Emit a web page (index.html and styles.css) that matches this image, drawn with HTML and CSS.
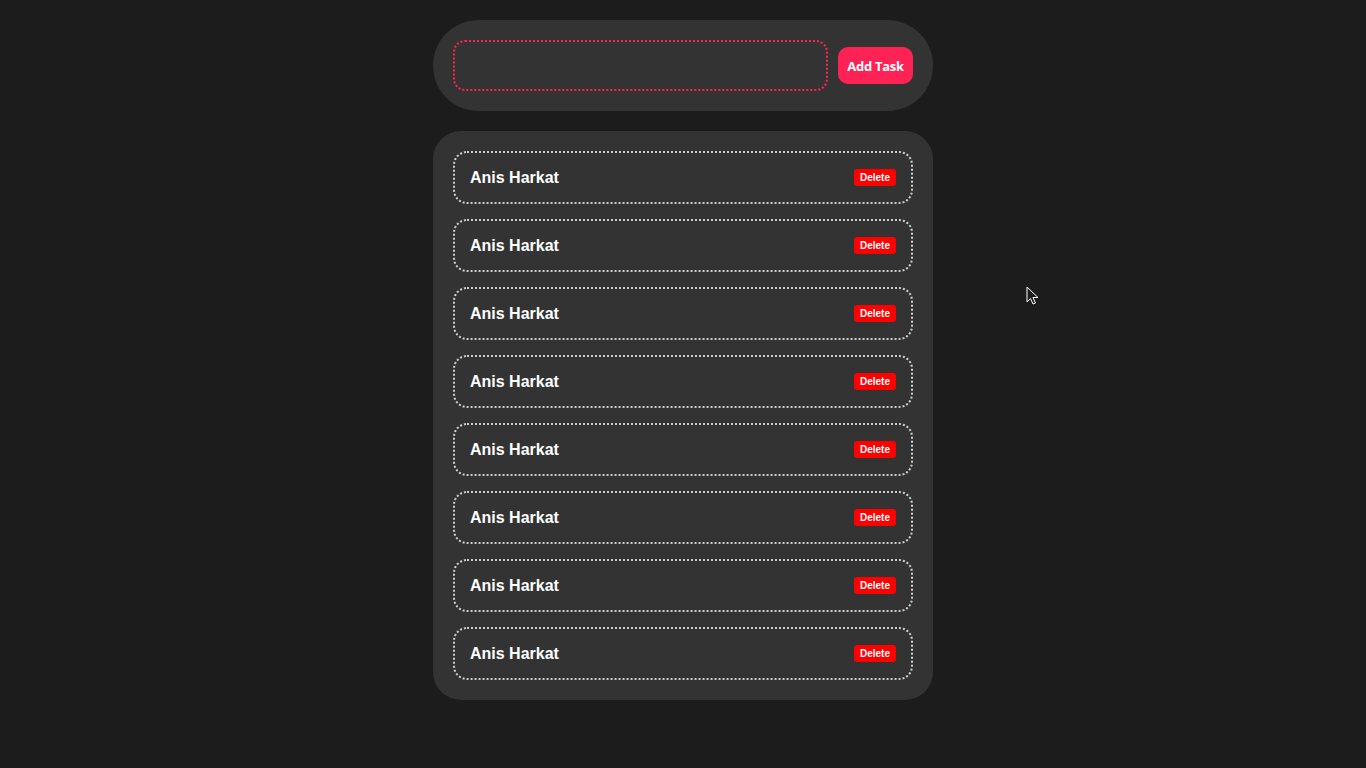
FILE: index.html
```html
<!DOCTYPE html>
<html lang="en">
<head>
<meta charset="utf-8">
<title>Todo</title>
<link rel="stylesheet" href="styles.css">
</head>
<body>
<main class="app">
  <form class="add-bar">
    <input class="task-input" type="text">
    <button class="add-btn" type="button">Add Task</button>
  </form>
  <ul class="task-list">
    <li class="task"><span class="task-name">Anis Harkat</span><button class="del-btn" type="button">Delete</button></li>
    <li class="task"><span class="task-name">Anis Harkat</span><button class="del-btn" type="button">Delete</button></li>
    <li class="task"><span class="task-name">Anis Harkat</span><button class="del-btn" type="button">Delete</button></li>
    <li class="task"><span class="task-name">Anis Harkat</span><button class="del-btn" type="button">Delete</button></li>
    <li class="task"><span class="task-name">Anis Harkat</span><button class="del-btn" type="button">Delete</button></li>
    <li class="task"><span class="task-name">Anis Harkat</span><button class="del-btn" type="button">Delete</button></li>
    <li class="task"><span class="task-name">Anis Harkat</span><button class="del-btn" type="button">Delete</button></li>
    <li class="task"><span class="task-name">Anis Harkat</span><button class="del-btn" type="button">Delete</button></li>
  </ul>
</main>
<svg class="cursor" width="14" height="20" viewBox="0 0 14 20"><path d="M1 1 L1 16 L4.5 12.5 L7 18 L9.5 17 L7 11.5 L12 11.5 Z" fill="#1c1c1c" stroke="#fff" stroke-width="1"/></svg>
</body>
</html>
```

FILE: styles.css
```css
* { box-sizing: border-box; }
html, body { margin: 0; padding: 0; }
body {
  background: #1c1c1c;
  min-height: 768px;
  font-family: "Liberation Sans", Arial, sans-serif;
}
.app {
  width: 500px;
  margin: 0 auto;
  padding-top: 20px;
  display: flex;
  flex-direction: column;
  gap: 20px;
}
.add-bar {
  margin: 0;
  height: 91px;
  background: #333333;
  border-radius: 46px;
  padding: 20px;
  display: flex;
  align-items: center;
  gap: 10px;
}
.task-input {
  width: 375px;
  height: 51px;
  background: #333333;
  border: 2px dotted #ff2255;
  border-radius: 12px;
  outline: none;
  color: #fff;
  padding: 0 12px;
}
.add-btn {
  width: 75px;
  height: 37px;
  border: none;
  border-radius: 10px;
  background: #ff2255;
  color: #fff;
  font-family: "Open Sans", "Noto Sans", sans-serif;
  font-weight: 700;
  font-size: 13px;
  padding: 0;
  letter-spacing: -0.3px;
}
.task-list {
  list-style: none;
  margin: 0;
  background: #333333;
  border-radius: 28px;
  padding: 20px;
  display: flex;
  flex-direction: column;
  gap: 15px;
}
.task {
  height: 53px;
  border: 2px dotted #cfcfcf;
  border-radius: 14px;
  padding: 0 15px;
  display: flex;
  align-items: center;
  justify-content: space-between;
}
.task-name {
  color: #fff;
  font-weight: 700;
  font-size: 16px;
}
.del-btn {
  background: #ff0000;
  color: #fff;
  border: none;
  border-radius: 3px;
  font-family: "Liberation Sans", Arial, sans-serif;
  font-weight: 700;
  font-size: 10px;
  width: 42px;
  height: 17px;
  padding: 0;
}
.cursor {
  position: absolute;
  left: 1026px;
  top: 286px;
}
```
